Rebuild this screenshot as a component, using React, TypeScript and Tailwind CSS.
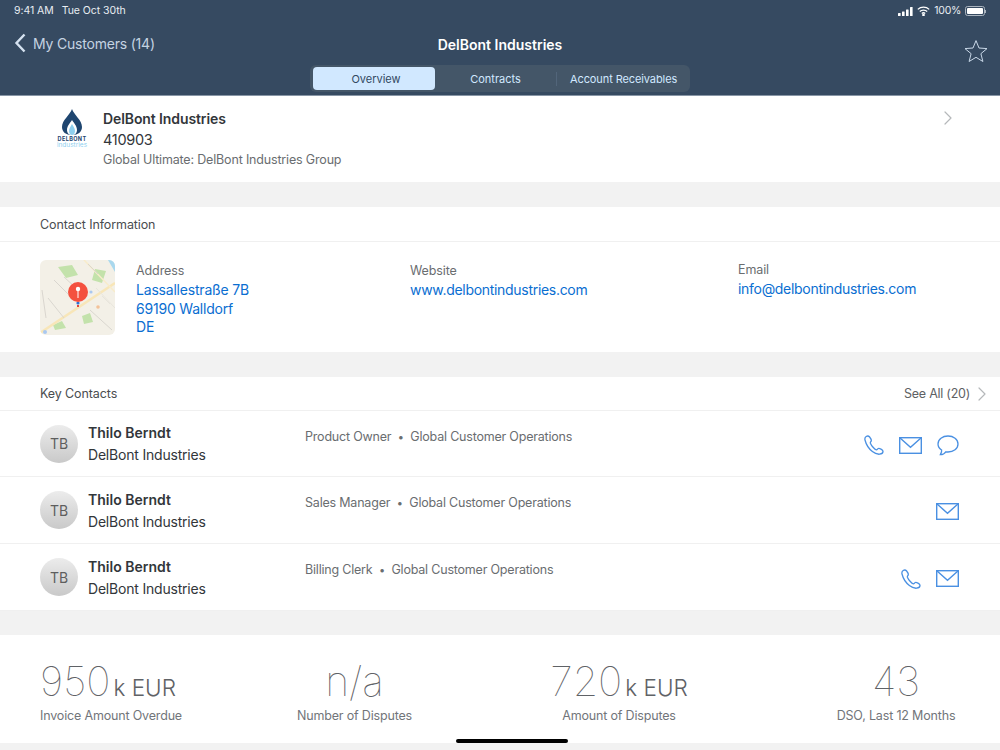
import { ChevronRight } from "lucide-react";

const font = "font-['Inter','Liberation_Sans',sans-serif]";

const PhoneIcon = () => (
  <svg width="20" height="20" viewBox="0 0 20 20" fill="none" stroke="#4a90e2" strokeWidth="1.3">
    <path d="M2.2 1.5 C1 2.3 .6 3.4 1 5 C2 9 4.6 13.5 8.4 16.6 C10.6 18.4 13 19.4 15.6 19.2 C17.4 19 18.9 18 19 16.6 C19.1 15.6 18.4 15 17.4 14.4 C16.3 13.8 15.2 13.2 14.3 13.5 C13.5 13.8 13.3 14.9 12.3 14.8 C10.6 14.5 7.4 10.6 6.4 8.2 C6 7 7.2 6.6 7.3 5.6 C7.4 4.6 6.4 3 5.6 2 C4.7 .9 3.4 .7 2.2 1.5 Z" />
  </svg>
);

const MailIcon = () => (
  <svg width="23" height="17" viewBox="0 0 23 17" fill="none" stroke="#4a90e2" strokeWidth="1.4">
    <rect x="0.7" y="0.7" width="21.6" height="15.6" />
    <path d="M0.8 0.8 L11.5 10.2 L22.2 0.8" />
  </svg>
);

const ChatIcon = () => (
  <svg width="22" height="21" viewBox="0 0 22 21" fill="none" stroke="#4a90e2" strokeWidth="1.3">
    <path d="M11 1 C5.5 1 1 4.3 1 9 C1 11.6 2.4 13.6 4.6 15 C4.9 16.6 4.2 18.2 3.4 19.6 C5.6 19.6 7.6 18.6 8.8 16.8 C9.5 16.9 10.2 17 11 17 C16.5 17 21 13.6 21 9 C21 4.3 16.5 1 11 1 Z" />
  </svg>
);

const MapThumb = () => (
  <svg width="75" height="75" viewBox="0 0 75 75" className="shrink-0 rounded-md">
    <rect width="75" height="75" fill="#f3f0e7" />
    <path d="M68 0 H75 V12 Z" fill="#a9d8ee" />
    <path d="M18 7 L32 5 L38 15 L26 18 Z" fill="#c3e2ab" />
    <path d="M55 9 L66 11 L62 23 L52 20 Z" fill="#c3e2ab" />
    <path d="M42 56 L50 53 L53 62 L44 64 Z" fill="#c3e2ab" />
    <path d="M13 65 L22 61 L26 68 L15 70 Z" fill="#c3e2ab" />
    <path d="M0 73 L75 23" stroke="#f8e6b8" strokeWidth="2.5" fill="none" />
    <path d="M44 0 L75 32" stroke="#f8ecca" strokeWidth="1.5" fill="none" />
    <path d="M14 20 L34 40 M8 38 L24 58 M24 17 L36 28 M50 50 L72 70 M2 30 L6 58 M48 4 L58 14" stroke="#d9d6cf" strokeWidth="1" fill="none" />
    <path d="M62 36 L70 44 M56 28 L75 48" stroke="#e8e5dc" strokeWidth="1" fill="none" />
    <circle cx="51" cy="32" r="1.6" fill="#a9c8f0" />
    <circle cx="58" cy="47" r="1.8" fill="#f3c29a" />
    <circle cx="5" cy="72" r="2" fill="#a9c8f0" />
    <circle cx="38" cy="43" r="1.6" fill="#2f6fd0" />
    <rect x="37" y="45" width="2" height="2" fill="#e0463a" />
    <circle cx="38" cy="32" r="10" fill="#f4513f" />
    <circle cx="38" cy="29" r="2.2" fill="#ffffff" />
    <rect x="37.5" y="29" width="1" height="9" fill="#ffffff" />
  </svg>
);

const contacts = [
  { role: "Product Owner", icons: ["phone", "mail", "chat"], h: "h-[66px]" },
  { role: "Sales Manager", icons: ["mail"], h: "h-[67px]" },
  { role: "Billing Clerk", icons: ["phone", "mail"], h: "h-[67px]" },
];

const ContactRow = ({ role, icons, h }: { role: string; icons: string[]; h: string }) => (
  <div className={`flex items-center border-b border-[#f0f0f0] pl-10 pr-[41px] ${h}`}>
    <div className="flex h-[38px] w-[38px] shrink-0 items-center justify-center rounded-full bg-gradient-to-b from-[#ececec] to-[#c9c9c9] text-[14px] text-[#5e5e5e]">
      TB
    </div>
    <div className="ml-[10px] w-[217px] shrink-0 pt-px">
      <div className="text-[14px] leading-[22px] font-semibold text-[#32363a]">Thilo Berndt</div>
      <div className="text-[14px] leading-[22px] tracking-[-0.2px] text-[#32363a]">DelBont Industries</div>
    </div>
    <div className="mb-[13px] flex items-center gap-[6.5px] text-[12.5px] tracking-[-0.2px] text-[#6a6d70]">
      <span>{role}</span>
      <span className="text-[11px]">•</span>
      <span>Global Customer Operations</span>
    </div>
    <div className="ml-auto flex items-center gap-[15px] pt-[3px]">
      {icons.map((icon) =>
        icon === "phone" ? <PhoneIcon key={icon} /> : icon === "mail" ? <MailIcon key={icon} /> : <ChatIcon key={icon} />
      )}
    </div>
  </div>
);

const Kpi = ({ value, unit, label, className }: { value: string; unit?: string; label: string; className: string }) => (
  <div className={`flex flex-col ${className}`}>
    <div className="flex items-baseline whitespace-nowrap text-[#5f6266]">
      <span className="text-[41px] leading-[48px] font-thin">{value}</span>
      {unit && <span className="ml-[3px] text-[22.5px] leading-none font-light">{unit}</span>}
    </div>
    <div className="mt-[3px] text-[12.5px] leading-[16px] tracking-[-0.17px] whitespace-nowrap text-[#72757a]">{label}</div>
  </div>
);

export default function App() {
  return (
    <div className={`relative h-[750px] w-[1000px] overflow-hidden bg-[#f2f2f2] ${font}`}>
      <header className="flex h-[96px] flex-col border-b border-[#8896a6] bg-[#364a61] text-white">
        <div className="flex h-[21px] items-center justify-between pl-[14px] pr-[14px] pt-[1px] text-[10.5px] text-[#e8edf2]">
          <div className="flex gap-[8px] tracking-[-0.05px]">
            <span>9:41 AM</span>
            <span>Tue Oct 30th</span>
          </div>
          <div className="flex items-center gap-[4px]">
            <svg width="15" height="9" viewBox="0 0 15 9" fill="#ffffff">
              <rect x="0" y="6" width="2.6" height="3" rx=".5" />
              <rect x="4" y="4.5" width="2.6" height="4.5" rx=".5" />
              <rect x="8" y="2.5" width="2.6" height="6.5" rx=".5" />
              <rect x="12" y="0" width="2.6" height="9" rx=".5" />
            </svg>
            <svg width="13" height="10" viewBox="0 0 13 10" fill="none" stroke="#ffffff" strokeWidth="1.3">
              <path d="M.8 3.4 C4 .4 9 .4 12.2 3.4" />
              <path d="M2.8 5.5 C4.8 3.7 8.2 3.7 10.2 5.5" />
              <path d="M4.8 7.4 C5.8 6.6 7.2 6.6 8.2 7.4" />
              <circle cx="6.5" cy="9" r=".7" fill="#ffffff" />
            </svg>
            <span className="tracking-[-0.3px]">100%</span>
            <div className="flex items-center">
              <div className="h-[10px] w-[20px] rounded-[2.5px] border border-[#aab4bf] p-[1px]">
                <div className="h-full w-full rounded-[1px] bg-white" />
              </div>
              <div className="h-[3px] w-[1px] bg-[#aab4bf]" />
            </div>
          </div>
        </div>
        <div className="relative flex h-[46px] items-center pl-[14px] pr-[12px]">
          <svg width="12" height="20" viewBox="0 0 12 20" fill="none" stroke="#d5e2f0" strokeWidth="2.4" className="mb-[2px]">
            <path d="M10.5 1.5 L2.5 10 L10.5 18.5" />
          </svg>
          <span className="mb-[1px] ml-[7px] text-[14px] tracking-[-0.2px] text-[#c5d3e2]">My Customers (14)</span>
          <span className="absolute left-0 right-0 text-center text-[14px] font-semibold text-white">DelBont Industries</span>
          <svg width="24" height="24" viewBox="0 0 24 24" fill="none" stroke="#c9d8e8" strokeWidth="1" className="ml-auto mt-[13px]">
            <path d="M12 1.6 L15 9 L23 9.6 L16.9 14.7 L18.9 22.5 L12 18.3 L5.1 22.5 L7.1 14.7 L1 9.6 L9 9 Z" />
          </svg>
        </div>
        <div className="flex justify-center">
          <div className="-mt-[2px] flex h-[27px] w-[380px] items-center rounded-[6px] bg-[#445668] pl-[3px] text-[11px]">
            <div className="flex h-[23px] w-[122px] items-center justify-center rounded-[4px] bg-[#d1e8ff] pl-1 pt-px text-[#32495f]">Overview</div>
            <div className="flex h-[23px] w-[121px] items-center justify-center pt-px text-[#d1e8ff]">Contracts</div>
            <div className="h-[14px] w-px bg-[#52657a]" />
            <div className="flex h-[23px] flex-1 items-center pl-[13px] pt-px tracking-[-0.1px] text-[#d1e8ff]">Account Receivables</div>
          </div>
        </div>
      </header>

      <section className="flex h-[86px] items-start bg-white pl-[57px] pr-[40px]">
        <div className="mt-[13px] flex w-[30px] flex-col items-center">
          <svg width="20" height="26" viewBox="0 0 20 26">
            <path d="M10 0 C12 6 20 11 20 18 C20 23 16 26 10 26 C4 26 0 23 0 18 C0 11 8 6 10 0 Z" fill="#1f4670" />
            <path d="M10 11 C12 14 15 17 15 21 C15 24 13 26 10 26 C7 26 5 24 5 21 C5 17 8 14 10 11 Z" fill="#ffffff" />
            <path d="M10 15 C11 17 13 19 13 22 C13 24 12 26 10 26 C8 26 7 24 7 22 C7 19 9 17 10 15 Z" fill="#8fd0ef" />
          </svg>
          <div className="mt-[1px] text-[5.5px] leading-[6px] font-bold tracking-[0.4px] whitespace-nowrap text-[#1f4670]">DELBONT</div>
          <div className="text-[6.5px] leading-[6px] whitespace-nowrap text-[#8fd0ef]">industries</div>
        </div>
        <div className="ml-[16px] mt-[12px]">
          <div className="text-[14px] leading-[21px] font-semibold tracking-[-0.1px] text-[#32363a]">DelBont Industries</div>
          <div className="text-[14.5px] leading-[21px] tracking-[-0.3px] text-[#32363a]">410903</div>
          <div className="text-[12.5px] leading-[20px] tracking-[-0.17px] text-[#6a6d70]">Global Ultimate: DelBont Industries Group</div>
        </div>
        <ChevronRight size={24} strokeWidth={1.2} className="ml-auto mt-[10px] text-[#b5b8ba]" />
      </section>

      <div className="h-[25px]" />

      <section className="h-[145px] bg-white">
        <div className="flex h-[35px] items-center border-b border-[#f0f0f0] pl-10 pt-[2px] text-[12.5px] tracking-[-0.1px] text-[#4a4d50]">Contact Information</div>
        <div className="flex pl-10 pt-[18px]">
          <MapThumb />
          <div className="ml-[21px] mt-px w-[274px] shrink-0">
            <div className="text-[12.5px] leading-[20px] tracking-[-0.1px] text-[#6a6d70]">Address</div>
            <div className="text-[14px] leading-[18.5px] tracking-[-0.2px] text-[#0a6ed1]">
              <div>Lassallestraße 7B</div>
              <div>69190 Walldorf</div>
              <div>DE</div>
            </div>
          </div>
          <div className="mt-px w-[328px] shrink-0">
            <div className="text-[12.5px] leading-[20px] tracking-[-0.1px] text-[#6a6d70]">Website</div>
            <div className="text-[14px] leading-[18.5px] tracking-[-0.3px] text-[#0a6ed1]">www.delbontindustries.com</div>
          </div>
          <div>
            <div className="text-[12.5px] leading-[20px] tracking-[-0.1px] text-[#6a6d70]">Email</div>
            <div className="text-[14px] leading-[18.5px] tracking-[-0.3px] text-[#0a6ed1]">info@delbontindustries.com</div>
          </div>
        </div>
      </section>

      <div className="h-[25px]" />

      <section className="bg-white">
        <div className="flex h-[34px] items-center justify-between border-b border-[#f0f0f0] pl-10 pr-[6px] pt-px text-[12.5px] tracking-[-0.1px]">
          <span className="text-[#4a4d50]">Key Contacts</span>
          <span className="flex items-center tracking-[-0.25px] text-[#5e6164]">
            See All (20)
            <ChevronRight size={24} strokeWidth={1.2} className="text-[#b5b8ba]" />
          </span>
        </div>
        {contacts.map((c) => (
          <ContactRow key={c.role} role={c.role} icons={c.icons} h={c.h} />
        ))}
      </section>

      <div className="h-[24px]" />

      <section className="flex h-[108px] bg-white pt-[22px]">
        <Kpi value="950" unit="k EUR" label="Invoice Amount Overdue" className="ml-10 w-[257px] items-start" />
        <Kpi value="n/a" label="Number of Disputes" className="w-[115px] items-center" />
        <Kpi value="720" unit="k EUR" label="Amount of Disputes" className="ml-[140px] w-[134px] items-center" />
        <Kpi value="43" label="DSO, Last 12 Months" className="ml-[150px] w-[120px] items-center" />
      </section>

      <div className="absolute bottom-[7px] left-[456px] h-[4px] w-[112px] rounded-full bg-black" />
    </div>
  );
}
